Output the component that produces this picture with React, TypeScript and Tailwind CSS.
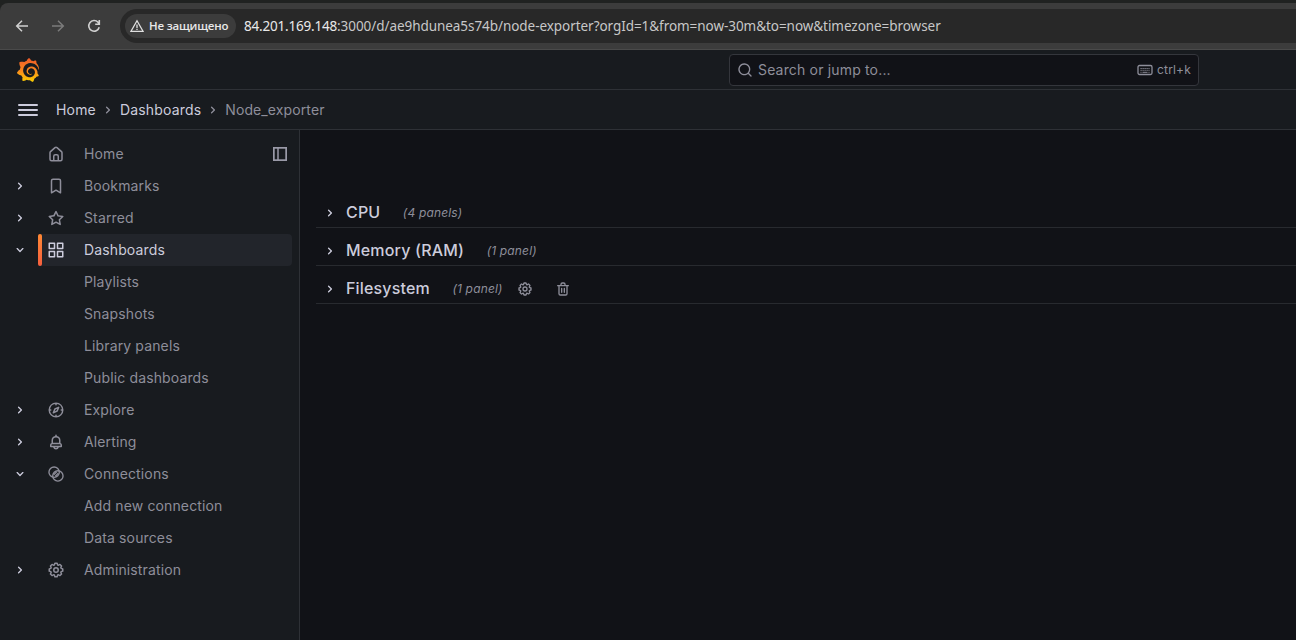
import { SiGrafana } from 'react-icons/si';

const paths = {
  angleRight:
    'M14.83,11.29,10.59,7.05a1,1,0,0,0-1.42,0,1,1,0,0,0,0,1.41L12.71,12,9.17,15.54a1,1,0,0,0,0,1.41,1,1,0,0,0,.71.29,1,1,0,0,0,.71-.29l4.24-4.24A1,1,0,0,0,14.83,11.29Z',
  angleDown:
    'M17,9.17a1,1,0,0,0-1.41,0L12,12.71,8.46,9.17a1,1,0,0,0-1.41,0,1,1,0,0,0,0,1.42l4.24,4.24a1,1,0,0,0,1.42,0L17,10.59A1,1,0,0,0,17,9.17Z',
  apps: 'M10,13H3a1,1,0,0,0-1,1v7a1,1,0,0,0,1,1h7a1,1,0,0,0,1-1V14A1,1,0,0,0,10,13ZM9,20H4V15H9ZM21,2H14a1,1,0,0,0-1,1v7a1,1,0,0,0,1,1h7a1,1,0,0,0,1-1V3A1,1,0,0,0,21,2ZM20,9H15V4h5Zm1,4H14a1,1,0,0,0-1,1v7a1,1,0,0,0,1,1h7a1,1,0,0,0,1-1V14A1,1,0,0,0,21,13Zm-1,7H15V15h5ZM10,2H3A1,1,0,0,0,2,3v7a1,1,0,0,0,1,1h7a1,1,0,0,0,1-1V3A1,1,0,0,0,10,2ZM9,9H4V4H9Z',
  home: 'M20,8h0L14,2.74a3,3,0,0,0-4,0L4,8a3,3,0,0,0-1,2.26V19a3,3,0,0,0,3,3H18a3,3,0,0,0,3-3V10.25A3,3,0,0,0,20,8ZM14,20H10V15a1,1,0,0,1,1-1h2a1,1,0,0,1,1,1Zm5-1a1,1,0,0,1-1,1H16V15a3,3,0,0,0-3-3H11a3,3,0,0,0-3,3v5H6a1,1,0,0,1-1-1V10.25a1,1,0,0,1,.34-.75l6-5.25a1,1,0,0,1,1.32,0l6,5.25a1,1,0,0,1,.34.75Z',
  bookmark:
    'M16,2H8A3,3,0,0,0,5,5V21a1,1,0,0,0,.5.87,1,1,0,0,0,1,0L12,18.69l5.5,3.18A1,1,0,0,0,18,22a1,1,0,0,0,.5-.13A1,1,0,0,0,19,21V5A3,3,0,0,0,16,2Zm1,17.27-4.5-2.6a1,1,0,0,0-1,0L7,19.27V5A1,1,0,0,1,8,4h8a1,1,0,0,1,1,1Z',
  star: 'M22,9.67A1,1,0,0,0,21.14,9l-5.69-.83L12.9,3a1,1,0,0,0-1.8,0L8.55,8.16,2.86,9a1,1,0,0,0-.81.68,1,1,0,0,0,.25,1l4.13,4-1,5.68A1,1,0,0,0,6.9,21.44L12,18.77l5.1,2.67a.93.93,0,0,0,.46.12,1,1,0,0,0,.59-.19,1,1,0,0,0,.4-1l-1-5.68,4.13-4A1,1,0,0,0,22,9.67Zm-6.15,4a1,1,0,0,0-.29.88l.72,4.2-3.76-2a1.06,1.06,0,0,0-.94,0l-3.76,2,.72-4.2a1,1,0,0,0-.29-.88l-3-3,4.21-.61a1,1,0,0,0,.76-.55L12,5.7l1.88,3.82a1,1,0,0,0,.76.55l4.21.61Z',
  bell: 'M18,13.18V10a6,6,0,0,0-5-5.91V3a1,1,0,0,0-2,0V4.09A6,6,0,0,0,6,10v3.18A3,3,0,0,0,4,16v2a1,1,0,0,0,1,1H8.14a4,4,0,0,0,7.72,0H19a1,1,0,0,0,1-1V16A3,3,0,0,0,18,13.18ZM8,10a4,4,0,0,1,8,0v3H8Zm4,10a2,2,0,0,1-1.72-1h3.44A2,2,0,0,1,12,20Zm6-3H6V16a1,1,0,0,1,1-1H17a1,1,0,0,1,1,1Z',
  trash:
    'M10,18a1,1,0,0,0,1-1V11a1,1,0,0,0-2,0v6A1,1,0,0,0,10,18ZM20,6H16V5a3,3,0,0,0-3-3H11A3,3,0,0,0,8,5V6H4A1,1,0,0,0,4,8H5V19a3,3,0,0,0,3,3h8a3,3,0,0,0,3-3V8h1a1,1,0,0,0,0-2ZM10,5a1,1,0,0,1,1-1h2a1,1,0,0,1,1,1V6H10Zm7,14a1,1,0,0,1-1,1H8a1,1,0,0,1-1-1V8H17Zm-3-1a1,1,0,0,0,1-1V11a1,1,0,0,0-2,0v6A1,1,0,0,0,14,18Z',
  search:
    'M21.71,20.29,18,16.61A9,9,0,1,0,16.61,18l3.68,3.68a1,1,0,0,0,1.42,0A1,1,0,0,0,21.71,20.29ZM11,18a7,7,0,1,1,7-7A7,7,0,0,1,11,18Z',
  cog: 'M21.32,9.55l-1.89-.63.89-1.78A1,1,0,0,0,20.13,6L18,3.87a1,1,0,0,0-1.15-.19l-1.78.89-.63-1.89A1,1,0,0,0,13.5,2h-3a1,1,0,0,0-.95.68L8.92,4.57,7.14,3.68A1,1,0,0,0,6,3.87L3.87,6a1,1,0,0,0-.19,1.15l.89,1.78-1.89.63A1,1,0,0,0,2,10.5v3a1,1,0,0,0,.68.95l1.89.63-.89,1.78A1,1,0,0,0,3.87,18L6,20.13a1,1,0,0,0,1.15.19l1.78-.89.63,1.89a1,1,0,0,0,.95.68h3a1,1,0,0,0,.95-.68l.63-1.89,1.78.89A1,1,0,0,0,18,20.13L20.13,18a1,1,0,0,0,.19-1.15l-.89-1.78,1.89-.63A1,1,0,0,0,22,13.5v-3A1,1,0,0,0,21.32,9.55ZM20,12.78l-1.2.4A2,2,0,0,0,17.64,16l.57,1.14-1.1,1.1L16,17.64a2,2,0,0,0-2.79,1.16l-.4,1.2H11.22l-.4-1.2A2,2,0,0,0,8,17.64l-1.14.57-1.1-1.1L6.36,16A2,2,0,0,0,5.2,13.18L4,12.78V11.22l1.2-.4A2,2,0,0,0,6.36,8L5.79,6.89l1.1-1.1L8,6.36A2,2,0,0,0,10.82,5.2l.4-1.2h1.56l.4,1.2A2,2,0,0,0,16,6.36l1.14-.57,1.1,1.1L17.64,8a2,2,0,0,0,1.16,2.79l1.2.4ZM12,8a4,4,0,1,0,4,4A4,4,0,0,0,12,8Zm0,6a2,2,0,1,1,2-2A2,2,0,0,1,12,14Z',
  compass:
    'M12,2A10,10,0,1,0,22,12,10,10,0,0,0,12,2Zm1,17.93V19a1,1,0,0,0-2,0v.93A8,8,0,0,1,4.07,13H5a1,1,0,0,0,0-2H4.07A8,8,0,0,1,11,4.07V5a1,1,0,0,0,2,0V4.07A8,8,0,0,1,19.93,11H19a1,1,0,0,0,0,2h.93A8,8,0,0,1,13,19.93ZM15.14,7.55l-5,2.12a1,1,0,0,0-.52.52l-2.12,5a1,1,0,0,0,.21,1.1,1,1,0,0,0,.7.3.93.93,0,0,0,.4-.09l5-2.12a1,1,0,0,0,.52-.52l2.12-5a1,1,0,0,0-1.31-1.31Zm-2.49,5.1-2.28,1,1-2.28,2.28-1Z',
};

type IconName = keyof typeof paths | 'connections';

function Icon({ name, className }: { name: IconName; className: string }) {
  if (name === 'connections') {
    return (
      <svg viewBox="0 0 24 24" className={className} fill="none" stroke="currentColor" strokeWidth="1.8">
        <circle cx="9.5" cy="9.5" r="6.9" />
        <circle cx="14.5" cy="14.5" r="6.9" />
        <path d="M9 13 13 9M11 15 15 11" strokeWidth="1.5" />
      </svg>
    );
  }
  return (
    <svg viewBox="0 0 24 24" className={className} fill="currentColor">
      <path d={paths[name]} />
    </svg>
  );
}

function BrowserBar() {
  return (
    <div className="h-[50px] shrink-0 bg-[#202221] pt-[3px]">
      <div className="flex h-[47px] items-center rounded-tl-lg border-b border-[#4a4a4a] bg-[#3c3c3c] pl-[14px]">
        <svg className="h-4 w-4" viewBox="0 0 16 16" fill="none" stroke="#d0d0d0" strokeWidth="1.5">
          <path d="M14 8H3M8 2.7 2.7 8 8 13.3" />
        </svg>
        <svg className="ml-5 h-4 w-4" viewBox="0 0 16 16" fill="none" stroke="#7b7b7b" strokeWidth="1.5">
          <path d="M2 8h11M8 2.7 13.3 8 8 13.3" />
        </svg>
        <svg className="ml-5 h-4 w-4" viewBox="0 0 16 16" fill="none" stroke="#d0d0d0" strokeWidth="1.6">
          <path d="M13.2 9.2A5.3 5.3 0 1 1 12 4.3L13 5.4M13.3 2v4.2H9.2" />
        </svg>
        <div className="ml-[18px] flex h-[34px] flex-1 items-center rounded-l-full bg-[#282828] pl-[5px]">
          <div className="flex h-6 w-[111px] items-center rounded-full bg-[#3c3c3c] pl-[5px]">
            <svg className="h-[14px] w-[14px] shrink-0" viewBox="0 0 14 14" fill="none" stroke="#e0e0e0" strokeWidth="1.3">
              <path d="M7 1.8 13 12.3H1ZM7 5.4V9M7 9.8v1.3" />
            </svg>
            <span className="ml-[5px] whitespace-nowrap font-['Open_Sans',sans-serif] text-[11.5px] font-semibold tracking-[-0.2px] text-[#e8e8e8]">
              Не защищено
            </span>
          </div>
          <span className="ml-[8px] whitespace-nowrap font-['Noto_Sans',sans-serif] text-[13.5px] tracking-[-0.055px] text-[#c7c7c7]">
            <span className="tracking-[-0.2px] text-[#e8e8e8]">84.201.169.148</span>
            :3000/d/ae9hdunea5s74b/node-exporter?orgId=1&amp;from=now-30m&amp;to=now&amp;timezone=browser
          </span>
        </div>
      </div>
    </div>
  );
}

function TopBar() {
  return (
    <div className="flex h-10 shrink-0 items-center border-b border-[#2e3136] bg-[#181b1f] pl-4">
      <svg className="absolute h-0 w-0">
        <defs>
          <linearGradient id="logo" x1="0" y1="1" x2="0" y2="0">
            <stop offset="0" stopColor="#fcd000" />
            <stop offset="0.5" stopColor="#f8861f" />
            <stop offset="1" stopColor="#f05a28" />
          </linearGradient>
        </defs>
      </svg>
      <SiGrafana className="h-6 w-6" style={{ fill: 'url(#logo)' }} />
      <div className="ml-[689px] flex h-8 w-[470px] items-center rounded-sm border border-[#34363c] bg-[#111217] px-[7px] text-[#8e8e9a]">
        <Icon name="search" className="h-4 w-4" />
        <span className="ml-[5px] text-sm">Search or jump to...</span>
        <svg className="ml-auto h-4 w-4" viewBox="0 0 16 16" fill="none" stroke="currentColor">
          <rect x="1" y="3.5" width="14" height="9" rx="1.5" strokeWidth="1.3" />
          <path d="M3.5 6.5h9M3.5 8.3h9" strokeDasharray="1.2 0.8" />
          <path d="M3.5 10.3h1M5.5 10.3h5M11.5 10.3h1" />
        </svg>
        <span className="ml-1 text-xs">ctrl+k</span>
      </div>
    </div>
  );
}

function Breadcrumbs() {
  return (
    <div className="flex h-10 shrink-0 items-center border-b border-[#2e3136] bg-[#181b1f] pl-[18px] text-sm text-[#ccccdc]">
      <div className="flex w-5 flex-col gap-[3px]">
        <span className="h-[2px] rounded-full bg-[#ccccdc]" />
        <span className="h-[2px] rounded-full bg-[#ccccdc]" />
        <span className="h-[2px] rounded-full bg-[#ccccdc]" />
      </div>
      <span className="ml-[18px]">Home</span>
      <Icon name="angleRight" className="mx-1 h-4 w-4 text-[#8e8e9a]" />
      <span>Dashboards</span>
      <Icon name="angleRight" className="mx-1 h-4 w-4 text-[#8e8e9a]" />
      <span className="tracking-[0.008em] text-[#8e8e9a]">Node_exporter</span>
    </div>
  );
}

type NavItem = { label: string; icon?: IconName; arrow?: 'angleRight' | 'angleDown'; active?: boolean; dock?: boolean };

const nav: NavItem[] = [
  { label: 'Home', icon: 'home', dock: true },
  { label: 'Bookmarks', icon: 'bookmark', arrow: 'angleRight' },
  { label: 'Starred', icon: 'star', arrow: 'angleRight' },
  { label: 'Dashboards', icon: 'apps', arrow: 'angleDown', active: true },
  { label: 'Playlists' },
  { label: 'Snapshots' },
  { label: 'Library panels' },
  { label: 'Public dashboards' },
  { label: 'Explore', icon: 'compass', arrow: 'angleRight' },
  { label: 'Alerting', icon: 'bell', arrow: 'angleRight' },
  { label: 'Connections', icon: 'connections', arrow: 'angleDown' },
  { label: 'Add new connection' },
  { label: 'Data sources' },
  { label: 'Administration', icon: 'cog', arrow: 'angleRight' },
];

function Sidebar() {
  return (
    <nav className="w-[300px] shrink-0 border-r border-[#2e3136] bg-[#181b1f] pt-2 pr-[7px]">
      {nav.map((item) => (
        <div key={item.label} className="flex h-8 items-center">
          <div className="w-[38px] pl-3">
            {item.arrow && <Icon name={item.arrow} className="h-4 w-4 text-[#ccccdc]" />}
          </div>
          <div
            className={
              item.active
                ? 'flex h-8 flex-1 items-center rounded-sm bg-[#22252b] text-[#ccccdc]'
                : 'flex h-8 flex-1 items-center text-[#8e8e9a]'
            }
          >
            <span
              className={
                item.active
                  ? 'h-8 w-1 rounded-sm bg-linear-to-b from-[#ff8833] to-[#f55f3e]'
                  : 'h-8 w-1'
              }
            />
            <span className="ml-[5px] w-[37px]">
              {item.icon && <Icon name={item.icon} className="h-[18px] w-[18px]" />}
            </span>
            <span className="text-sm tracking-[0.0095em]">{item.label}</span>
            {item.dock && (
              <svg className="mr-[5px] ml-auto h-[14px] w-[14px]" viewBox="0 0 14 14" fill="none" stroke="#9a9aa8">
                <rect x="0.85" y="0.85" width="12.3" height="12.3" strokeWidth="1.7" />
                <path d="M5 1v12" strokeWidth="1.5" />
              </svg>
            )}
          </div>
        </div>
      ))}
    </nav>
  );
}

const rows = [
  { title: 'CPU', count: '(4 panels)' },
  { title: 'Memory (RAM)', count: '(1 panel)' },
  { title: 'Filesystem', count: '(1 panel)', actions: true },
];

function Rows() {
  return (
    <main className="flex flex-1 flex-col gap-2 bg-[#111217] pt-[68px] pl-4">
      {rows.map((row) => (
        <div key={row.title} className="flex h-[30px] items-center border-b border-[#282a2f] pl-1.5">
          <Icon name="angleRight" className="h-4 w-4 text-[#ccccdc]" />
          <span className="ml-2 pb-[2px] text-base font-medium text-[#ccccdc]">{row.title}</span>
          <span className="ml-[22.5px] text-xs text-[#8e8e9a] italic">{row.count}</span>
          {row.actions && (
            <div className="ml-[14.5px] flex gap-[22px] text-[#8e8e9a]">
              <Icon name="cog" className="h-4 w-4" />
              <Icon name="trash" className="h-4 w-4" />
            </div>
          )}
        </div>
      ))}
    </main>
  );
}

export default function App() {
  return (
    <div className="flex h-[640px] w-[1296px] flex-col overflow-hidden bg-[#111217] font-['Inter',sans-serif] tracking-[0.01071em]">
      <BrowserBar />
      <TopBar />
      <Breadcrumbs />
      <div className="flex min-h-0 flex-1">
        <Sidebar />
        <Rows />
      </div>
    </div>
  );
}
